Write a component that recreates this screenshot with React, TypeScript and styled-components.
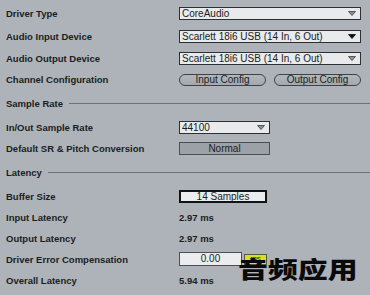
import React from 'react';
import styled, { createGlobalStyle } from 'styled-components';

const GlobalStyle = createGlobalStyle`
  body {
    margin: 0;
    background: #adb3b9;
    font-family: 'Liberation Sans', Arial, sans-serif;
    color: #1b1d20;
  }
`;

const Panel = styled.div`
  position: relative;
  width: 370px;
  height: 295px;
  padding: 2px 9px 0 6px;
  box-sizing: border-box;
  overflow: hidden;
`;

const Row = styled.div<{ $h?: number }>`
  display: grid;
  grid-template-columns: 173px 1fr;
  align-items: center;
  height: ${({ $h }) => $h || 21}px;
`;

const Label = styled.div`
  font-size: 9.5px;
  font-weight: bold;
  white-space: nowrap;
`;

const Value = styled(Label)``;

const SectionHeader = styled.div<{ $h: number }>`
  display: flex;
  align-items: center;
  gap: 6px;
  height: ${({ $h }) => $h}px;
  margin-right: -9px;
  font-size: 9.5px;
  font-weight: bold;

  &::after {
    content: '';
    flex: 1;
    height: 1px;
    background: #6c7278;
  }
`;

const SelectBox = styled.div<{ $w?: number }>`
  display: flex;
  align-items: center;
  justify-content: space-between;
  width: ${({ $w }) => ($w ? `${$w}px` : '100%')};
  height: 13px;
  box-sizing: border-box;
  padding: 0 4px 0 2px;
  background: #e8eaec;
  border: 1px solid #2c2f33;
  font-size: 10px;
  white-space: nowrap;
`;

const ButtonPair = styled.div`
  display: flex;
  gap: 8px;
`;

const PillButton = styled.div`
  width: 87px;
  height: 12px;
  box-sizing: border-box;
  border: 1px solid #3e4247;
  border-radius: 7px;
  background: linear-gradient(#b2b8be, #a2a8ae);
  font-size: 10px;
  line-height: 10px;
  text-align: center;
`;

const FlatButton = styled.div`
  width: 91px;
  height: 13px;
  box-sizing: border-box;
  border: 1px solid #4a4f55;
  background: #9ba1a7;
  font-size: 10px;
  line-height: 11px;
  text-align: center;
`;

const NumberBox = styled.div<{ $w: number; $thick?: boolean }>`
  width: ${({ $w }) => $w}px;
  height: ${({ $thick }) => ($thick ? 13 : 14)}px;
  box-sizing: border-box;
  border: ${({ $thick }) => ($thick ? '2px solid #111315' : '1px solid #4a4f55')};
  background: #eaeced;
  font-size: 10px;
  line-height: ${({ $thick }) => ($thick ? 9 : 12)}px;
  text-align: center;
`;

const Inline = styled.div`
  display: flex;
  align-items: center;
  gap: 2px;
`;

const UnitButton = styled.div`
  width: 23px;
  height: 11px;
  box-sizing: border-box;
  border: 1px solid #555a3a;
  background: #d5e021;
  font-size: 8px;
  line-height: 8px;
  text-align: center;
`;

const Watermark = styled.div`
  position: absolute;
  left: 238px;
  top: 257px;
  font-family: 'Noto Sans CJK SC', sans-serif;
  font-size: 23px;
  font-weight: 900;
  line-height: 1;
  color: #0a0a0a;
  transform: scaleX(1.3);
  transform-origin: left top;
  white-space: nowrap;
`;

const Arrow = ({ dark }: { dark?: boolean }) => (
  <svg width="8" height="5" viewBox="0 0 8 5">
    <path
      d="M0.5 0.5 L7.5 0.5 L4 4.5 Z"
      fill={dark ? '#111' : '#8a9096'}
      stroke={dark ? '#111' : '#3a3e43'}
      strokeWidth="0.8"
    />
  </svg>
);

const Select = ({ value, w, dark }: { value: string; w?: number; dark?: boolean }) => (
  <SelectBox $w={w}>
    <span>{value}</span>
    <Arrow dark={dark} />
  </SelectBox>
);

const App = () => (
  <>
    <GlobalStyle />
    <Panel>
      <Row $h={22}>
        <Label>Driver Type</Label>
        <Select value="CoreAudio" />
      </Row>
      <Row $h={24}>
        <Label>Audio Input Device</Label>
        <Select value="Scarlett 18i6 USB (14 In, 6 Out)" dark />
      </Row>
      <Row>
        <Label>Audio Output Device</Label>
        <Select value="Scarlett 18i6 USB (14 In, 6 Out)" />
      </Row>
      <Row>
        <Label>Channel Configuration</Label>
        <ButtonPair>
          <PillButton>Input Config</PillButton>
          <PillButton>Output Config</PillButton>
        </ButtonPair>
      </Row>

      <SectionHeader $h={27}>Sample Rate</SectionHeader>
      <Row>
        <Label>In/Out Sample Rate</Label>
        <Select value="44100" w={91} />
      </Row>
      <Row>
        <Label>Default SR &amp; Pitch Conversion</Label>
        <FlatButton>Normal</FlatButton>
      </Row>

      <SectionHeader $h={27}>Latency</SectionHeader>
      <Row>
        <Label>Buffer Size</Label>
        <NumberBox $w={88} $thick>14 Samples</NumberBox>
      </Row>
      <Row>
        <Label>Input Latency</Label>
        <Value>2.97 ms</Value>
      </Row>
      <Row $h={20}>
        <Label>Output Latency</Label>
        <Value>2.97 ms</Value>
      </Row>
      <Row $h={22}>
        <Label>Driver Error Compensation</Label>
        <Inline>
          <NumberBox $w={63}>0.00</NumberBox>
          <UnitButton>ms</UnitButton>
        </Inline>
      </Row>
      <Row>
        <Label>Overall Latency</Label>
        <Value>5.94 ms</Value>
      </Row>

      <Watermark>音频应用</Watermark>
    </Panel>
  </>
);

export default App;
